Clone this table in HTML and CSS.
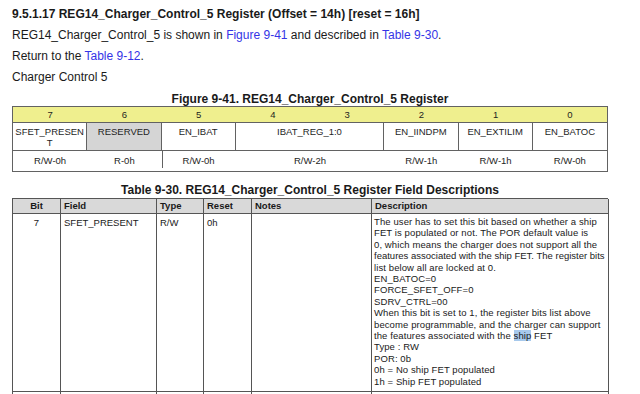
FILE: index.html
```html
<!DOCTYPE html>
<html>
<head>
<meta charset="utf-8">
<link rel="stylesheet" href="styles.css">
</head>
<body>
<div class="page">
  <h1 class="title">9.5.1.17 REG14_Charger_Control_5 Register (Offset = 14h) [reset = 16h]</h1>
  <p class="para">REG14_Charger_Control_5 is shown in <a class="link">Figure 9-41</a> and described in <a class="link">Table 9-30</a>.</p>
  <p class="para">Return to the <a class="link">Table 9-12</a>.</p>
  <p class="para">Charger Control 5</p>

  <div class="caption">Figure 9-41. REG14_Charger_Control_5 Register</div>
  <div class="reg">
    <div class="bitnum">7</div>
    <div class="bitnum">6</div>
    <div class="bitnum">5</div>
    <div class="bitnum">4</div>
    <div class="bitnum">3</div>
    <div class="bitnum">2</div>
    <div class="bitnum">1</div>
    <div class="bitnum">0</div>

    <div class="name">SFET_PRESEN<br>T</div>
    <div class="name reserved">RESERVED</div>
    <div class="name">EN_IBAT</div>
    <div class="name span2">IBAT_REG_1:0</div>
    <div class="name">EN_IINDPM</div>
    <div class="name">EN_EXTILIM</div>
    <div class="name last">EN_BATOC</div>

    <div class="access">R/W-0h</div>
    <div class="access">R-0h</div>
    <div class="access tick">R/W-0h</div>
    <div class="access span2">R/W-2h</div>
    <div class="access">R/W-1h</div>
    <div class="access">R/W-1h</div>
    <div class="access">R/W-0h</div>
  </div>

  <div class="caption caption-table">Table 9-30. REG14_Charger_Control_5 Register Field Descriptions</div>
  <div class="fields">
    <div class="fh center">Bit</div>
    <div class="fh">Field</div>
    <div class="fh">Type</div>
    <div class="fh">Reset</div>
    <div class="fh">Notes</div>
    <div class="fh">Description</div>

    <div class="fc center">7</div>
    <div class="fc">SFET_PRESENT</div>
    <div class="fc">R/W</div>
    <div class="fc">0h</div>
    <div class="fc"></div>
    <div class="fc desc">The user has to set this bit based on whether a ship<br>FET is populated or not. The POR default value is<br>0, which means the charger does not support all the<br><span class="tight">features associated with the ship FET. The register bits</span><br>list below all are locked at 0.<br>EN_BATOC=0<br>FORCE_SFET_OFF=0<br>SDRV_CTRL=00<br>When this bit is set to 1, the register bits list above<br>become programmable, and the charger can support<br>the features associated with the <span class="hl">ship</span> FET<br>Type : RW<br>POR: 0b<br>0h = No ship FET populated<br>1h = Ship FET populated</div>

    <div class="fc"></div>
    <div class="fc"></div>
    <div class="fc"></div>
    <div class="fc"></div>
    <div class="fc"></div>
    <div class="fc"></div>
  </div>
</div>
</body>
</html>
```
FILE: styles.css
```css
html, body {
  margin: 0;
  padding: 0;
  background: #ffffff;
}
body {
  color: #1a1a1a;
  font-family: "Liberation Sans", Arial, sans-serif;
  overflow: hidden;
}
.page {
  padding: 4px 0 0 12px;
  width: 596px;
}
.title {
  margin: 0;
  font-size: 12px;
  font-weight: bold;
  line-height: 21px;
}
.para {
  margin: 0;
  font-size: 12px;
  line-height: 21px;
}
.link {
  color: #3434e6;
  text-decoration: none;
}
.caption {
  margin-top: 4px;
  font-size: 12px;
  font-weight: bold;
  line-height: 14px;
  text-align: center;
}
.caption-table {
  margin-top: 11px;
}

/* register figure */
.reg {
  box-sizing: border-box;
  width: 596px;
  border: 1px solid #626262;
  display: grid;
  grid-template-columns: repeat(8, 1fr);
  font-size: 9.5px;
  color: #1e1e1e;
}
.bitnum {
  height: 16px;
  box-sizing: border-box;
  line-height: 15px;
  text-align: center;
  background: #efef8e;
  border-bottom: 1px solid #626262;
}
.name {
  height: 28px;
  box-sizing: border-box;
  padding-top: 3px;
  line-height: 11px;
  text-align: center;
  border-bottom: 1px solid #626262;
  border-right: 1px solid #626262;
}
.name.last {
  border-right: none;
}
.reserved {
  background: #d5d5d5;
}
.span2 {
  grid-column: span 2;
}
.access {
  height: 20px;
  line-height: 19px;
  text-align: center;
}
.tick {
  background: linear-gradient(#626262, #626262) no-repeat left top / 1px 17px;
}

/* field description table */
.fields {
  margin-top: 1px;
  display: grid;
  grid-template-columns: 48px 96px 47px 48px 120px 237px;
  grid-template-rows: 15px 178px 12px;
  border-top: 1px solid #555555;
  border-left: 1px solid #555555;
  box-sizing: border-box;
  width: 596px;
  font-size: 9.5px;
  color: #1a1a1a;
}
.fh {
  box-sizing: border-box;
  background: #d9d9d9;
  font-weight: bold;
  line-height: 14px;
  padding-left: 3px;
  border-right: 1px solid #555555;
  border-bottom: 1px solid #555555;
}
.fc {
  box-sizing: border-box;
  padding: 3px 0 0 3px;
  line-height: 11.4px;
  border-right: 1px solid #555555;
  border-bottom: 1px solid #555555;
}
.center {
  text-align: center;
  padding-left: 0;
}
.desc {
  padding: 2px 0 0 2px;
  letter-spacing: 0.1px;
  white-space: nowrap;
}
.tight {
  letter-spacing: 0;
}
.hl {
  background: #a7c9ec;
}
```
